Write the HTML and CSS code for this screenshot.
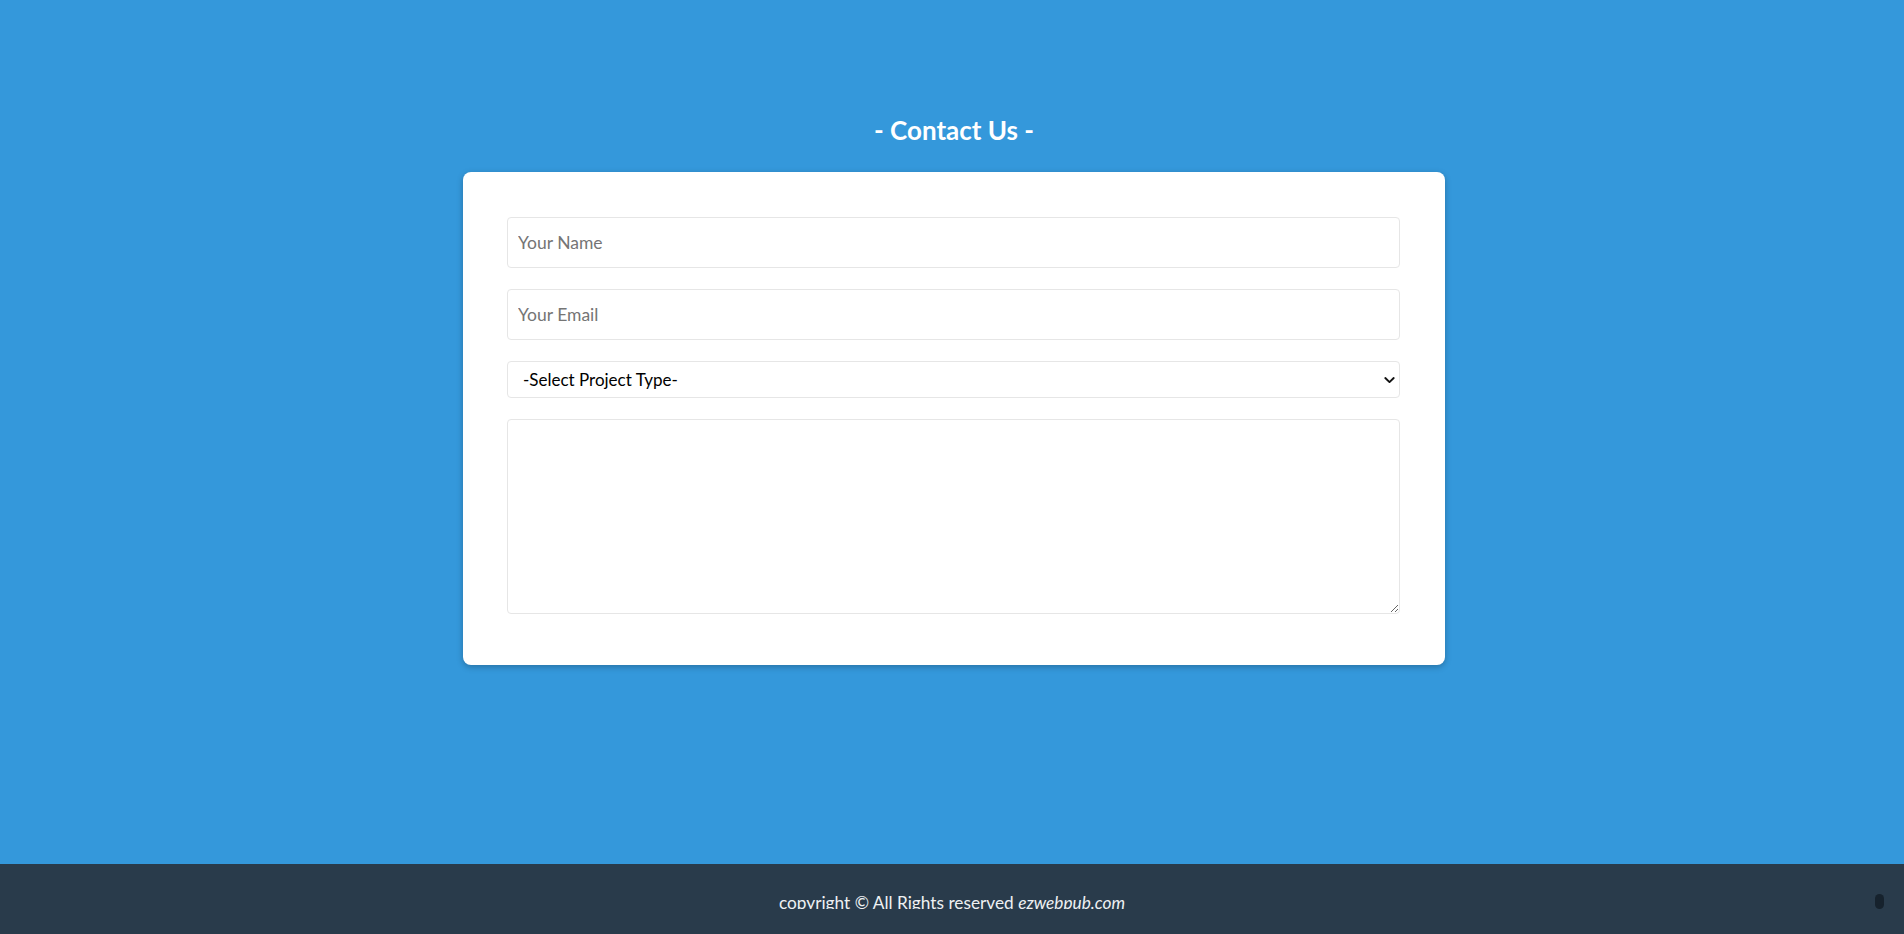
FILE: index.html
```html
<!DOCTYPE html>
<html lang="en">
<head>
<meta charset="utf-8">
<title>Contact Us</title>
<link rel="stylesheet" href="styles.css">
</head>
<body>
<main class="page">
  <h1 class="title">- Contact Us -</h1>
  <form class="card">
    <input class="field" type="text" placeholder="Your Name">
    <input class="field" type="email" placeholder="Your Email">
    <div class="select-wrap">
      <select class="select">
        <option>-Select Project Type-</option>
        <option>Website</option>
        <option>Mobile App</option>
        <option>Other</option>
      </select>
      <svg class="chevron" viewBox="0 0 12 8" width="11" height="7" aria-hidden="true">
        <path d="M1.2 1.2 L6 5.8 L10.8 1.2" fill="none" stroke="#111" stroke-width="2.2" stroke-linecap="round" stroke-linejoin="round"/>
      </svg>
    </div>
    <textarea class="message"></textarea>
  </form>
</main>
<footer class="footer">
  <p class="copy">copyright © All Rights reserved <em>ezwebpub.com</em></p>
  <span class="totop"></span>
</footer>
</body>
</html>
```
FILE: styles.css
```css
* { box-sizing: border-box; }
html, body { margin: 0; padding: 0; }
body {
  font-family: "Lato", "Noto Sans", sans-serif;
  background: #3498db;
  min-height: 100vh;
  display: flex;
  flex-direction: column;
}
.page {
  flex: 1;
  padding: 115px 0 0 4px;
}
.title {
  margin: 0;
  text-align: center;
  color: #fff;
  font-size: 26px;
  line-height: 30px;
  font-weight: 700;
}
.card {
  width: 982px;
  margin: 27px auto 0;
  background: #fff;
  border-radius: 8px;
  padding: 45px 45px 51px 44px;
  box-shadow: 0 2px 6px rgba(0, 0, 0, 0.25);
  display: flex;
  flex-direction: column;
  gap: 21px;
}
.field {
  display: block;
  width: 100%;
  height: 51px;
  border: 1px solid #e6e6e6;
  border-radius: 4px;
  padding: 0 10px;
  font-family: inherit;
  font-size: 17.5px;
  color: #333;
  outline: none;
}
.field::placeholder { color: #757575; }
.select-wrap { position: relative; }
.select {
  display: block;
  width: 100%;
  height: 37px;
  border: 1px solid #e6e6e6;
  border-radius: 4px;
  padding: 0 15px;
  font-family: inherit;
  font-size: 17px;
  color: #000;
  background: #fff;
  appearance: none;
  -webkit-appearance: none;
  outline: none;
}
.chevron {
  position: absolute;
  right: 5px;
  top: 16px;
}
.message {
  display: block;
  width: 100%;
  height: 195px;
  border: 1px solid #e6e6e6;
  border-radius: 4px;
  font-family: inherit;
  font-size: 17px;
  resize: both;
  outline: none;
}
.footer {
  position: relative;
  height: 70px;
  background: #293b4b;
  padding-top: 29px;
}
.copy {
  margin: 0;
  height: 16px;
  overflow: hidden;
  text-align: center;
  color: #eef1f3;
  font-size: 17.25px;
  line-height: 20px;
}
.copy em { font-style: italic; }
.totop {
  position: absolute;
  right: 20px;
  top: 30px;
  width: 9px;
  height: 15px;
  border-radius: 5px;
  background: #16222d;
}
```
